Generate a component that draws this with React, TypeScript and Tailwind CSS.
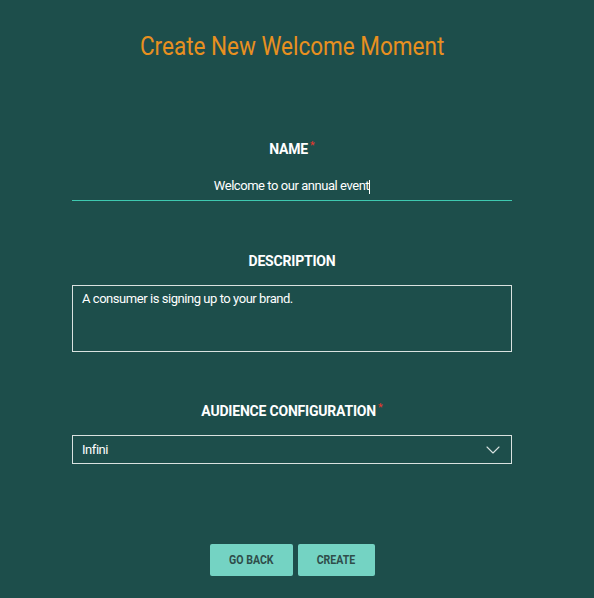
import { ChevronDown } from 'lucide-react'

const Label = ({ text, required }: { text: string; required?: boolean }) => (
  <div className="flex justify-center items-start">
    <span className="text-[14px] font-bold leading-none tracking-[-0.2px] text-white">{text}</span>
    {required && <span className="ml-[2px] -mt-[2px] text-[11px] leading-none text-[#e8372c]">*</span>}
  </div>
)

export default function App() {
  return (
    <div className="min-h-[598px] w-full bg-[#1d4e4b] font-['Roboto',sans-serif]">
      <div className="w-[584px] flex flex-col items-center">
        {/* title */}
        <h1 className="pt-[33px] text-[25px] leading-[28px] text-[#e8901f]">
          <span className="inline-block scale-x-[0.9]">Create New Welcome Moment</span>
        </h1>

        <div className="mt-[81px] w-[440px] flex flex-col">
          {/* name */}
          <Label text="NAME" required />
          <div className="mt-[22px] border-b border-[#3ec9b0] pb-[6px] text-center text-[13px] leading-[16px] tracking-[-0.45px] text-white">
            Welcome to our annual event<span className="inline-block w-px h-[14px] bg-white align-middle" />
          </div>

          {/* description */}
          <div className="mt-[53px]">
            <Label text="DESCRIPTION" />
          </div>
          <div className="mt-[17px] h-[67px] border border-[#d9e2e0] px-[9px] pt-[5px] text-[13px] leading-[16px] tracking-[-0.45px] text-white">
            A consumer is signing up to your brand.
          </div>

          {/* audience */}
          <div className="mt-[52px]">
            <Label text="AUDIENCE CONFIGURATION" required />
          </div>
          <div className="mt-[17px] h-[29px] border border-[#d9e2e0] pl-[9px] pr-[6px] flex items-center justify-between text-[13px] tracking-[-0.45px] text-white">
            <span>Infini</span>
            <ChevronDown className="w-[24px] h-[24px] text-[#d9e2e0]" strokeWidth={1.1} />
          </div>
        </div>

        {/* actions */}
        <div className="mt-[80px] flex gap-[5px]">
          <button className="h-[32px] w-[83px] rounded-[2px] bg-[#74d3c3] text-[12px] font-bold text-[#2f4d4a]">
            <span className="inline-block scale-x-[0.88]">GO BACK</span>
          </button>
          <button className="h-[32px] w-[77px] rounded-[2px] bg-[#74d3c3] text-[12px] font-bold text-[#2f4d4a]">
            <span className="inline-block scale-x-[0.88]">CREATE</span>
          </button>
        </div>
      </div>
    </div>
  )
}
